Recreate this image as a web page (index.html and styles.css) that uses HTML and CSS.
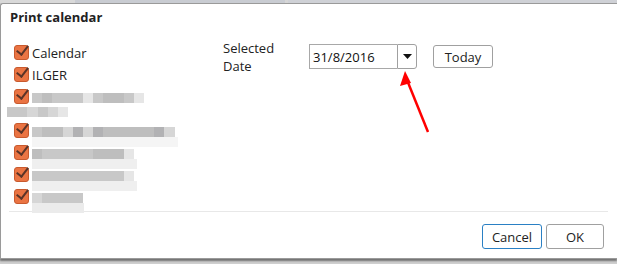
FILE: index.html
```html
<!DOCTYPE html>
<html lang="en">
<head>
<meta charset="UTF-8" />
<title>Print calendar</title>
<meta name="viewport" content="width=device-width, initial-scale=1.0">
<link rel="stylesheet" href="styles.css">
</head>
<body>

  <div class="backdrop"></div>

  <div class="dialog">
    <div class="dialog-title">Print calendar</div>

    <div class="dialog-body">
      <ul class="cal-list">
        <li><span class="check"></span><span>Calendar</span></li>
        <li><span class="check"></span><span>ILGER</span></li>
        <li class="wrap">
          <span class="check"></span>
          <span class="blur">
            <span class="row">
              <i class="g3"></i><i class="g2"></i><i class="g3"></i><i class="g3"></i><i class="g3"></i><i class="g5"></i><i class="g3"></i><i class="g2"></i><i class="g2"></i><i class="g3"></i><i class="g5"></i>
            </span>
          </span>
        </li>
        <li class="overflow">
          <span class="blur">
            <span class="row">
              <i class="g3"></i><i class="g3"></i><i class="g4"></i><i class="g3"></i><i class="g4"></i><i class="g5"></i>
            </span>
          </span>
        </li>
        <li>
          <span class="check"></span>
          <span class="blur">
            <span class="row">
              <i class="g3"></i><i class="g2"></i><i class="g2"></i><i class="g4"></i><i class="g1"></i><i class="g4"></i><i class="g1"></i><i class="g2"></i><i class="g2"></i><i class="g2"></i><i class="g2"></i><i class="g2"></i><i class="g1"></i><i class="g4"></i>
            </span>
            <span class="row light"></span>
          </span>
        </li>
        <li>
          <span class="check"></span>
          <span class="blur">
            <span class="row">
              <i class="g2"></i><i class="g3"></i><i class="g3"></i><i class="g3"></i><i class="g3"></i><i class="g3"></i><i class="g2"></i><i class="g2"></i><i class="g2"></i><i class="g5"></i>
            </span>
            <span class="row light short"></span>
          </span>
        </li>
        <li>
          <span class="check"></span>
          <span class="blur">
            <span class="row">
              <i class="g3"></i><i class="g3"></i><i class="g3"></i><i class="g3"></i><i class="g3"></i><i class="g3"></i><i class="g3"></i><i class="g3"></i><i class="g3"></i><i class="g5"></i>
            </span>
            <span class="row light short"></span>
          </span>
        </li>
        <li>
          <span class="check"></span>
          <span class="blur">
            <span class="row">
              <i class="g4"></i><i class="g3"></i><i class="g3"></i><i class="g3"></i><i class="g3"></i>
            </span>
            <span class="row light tiny"></span>
          </span>
        </li>
      </ul>

      <div class="date-area">
        <div class="date-label">
          <span>Selected</span>
          <span>Date</span>
        </div>
        <div class="date-field">
          <input type="text" value="31/8/2016">
          <button class="drop">
            <svg width="9" height="5" viewBox="0 0 9 5"><path d="M0 0h9L4.5 5z" fill="#111"/></svg>
          </button>
        </div>
        <button class="btn today">Today</button>
      </div>
    </div>

    <div class="dialog-footer">
      <button class="btn cancel">Cancel</button>
      <button class="btn ok">OK</button>
    </div>
  </div>

  <svg class="arrow" width="617" height="264" viewBox="0 0 617 264">
    <line x1="428" y1="132" x2="407" y2="80" stroke="#f00" stroke-width="2.5"/>
    <path d="M405 71 L400 86 L411 83 z" fill="#f00"/>
  </svg>

</body>
</html>
```

FILE: styles.css
```css
body {
  margin: 0;
  font-family: "Open Sans", Arial, sans-serif;
  font-size: 13px;
  color: #222;
  background-color: #cfcfcf;
  height: 264px;
  overflow: hidden;
}
.backdrop {
  height: 3px;
  background: linear-gradient(90deg, #d9d9d9 0, #d9d9d9 75px, #c9ccd2 75px, #c9ccd2 285px, #d6d6d6 285px, #d6d6d6 288px, #cfd1d6 288px);
}
.dialog {
  background-color: #fff;
  border: 1px solid #9a9a9a;
  border-right: none;
  border-radius: 3px 0 0 0;
  height: 254px;
  box-shadow: 0 2px 2px rgba(0, 0, 0, 0.45);
  display: flex;
  flex-direction: column;
}
.dialog-title {
  font-weight: bold;
  padding: 4px 9px 0;
  line-height: 18px;
  height: 25px;
}
.dialog-body {
  display: flex;
  flex: 1;
  border-bottom: 1px solid #e8e8e8;
  margin: 0 9px 0 8px;
}
.cal-list {
  list-style: none;
  margin: 0;
  padding: 14px 0 0 5px;
  width: 209px;
}
.cal-list li {
  display: flex;
  align-items: flex-start;
  gap: 3px;
  height: 22px;
  line-height: 16px;
}
.cal-list li.wrap {
  height: 14px;
}
.cal-list li.overflow {
  height: 20px;
  margin-left: -7px;
}
.check {
  width: 15px;
  height: 15px;
  flex: none;
  box-sizing: border-box;
  border-radius: 3px;
  background-color: #ea7443;
  border: 1px solid #c85a2e;
  position: relative;
}
.check::after {
  content: "";
  position: absolute;
  left: 4px;
  top: -3px;
  width: 5px;
  height: 10px;
  border: solid #5a3428;
  border-width: 0 2.5px 2.5px 0;
  transform: rotate(38deg);
}
.blur {
  display: flex;
  flex-direction: column;
  margin-top: 4px;
}
.blur .row {
  display: flex;
  height: 10px;
}
.blur .row i {
  display: block;
  width: 10.2px;
  height: 10px;
}
.blur .row.light {
  width: 146px;
  background-color: #f5f5f5;
}
.blur .row.light.short {
  width: 105px;
  background-color: #efefef;
}
.blur .row.light.tiny {
  width: 52px;
  background-color: #ebebeb;
}
.g1 { background-color: #b2b2b4; }
.g2 { background-color: #bebebe; }
.g3 { background-color: #c8c8c8; }
.g4 { background-color: #d6d6d6; }
.g5 { background-color: #e6e6e6; }
.date-area {
  display: flex;
  align-items: flex-start;
  padding-top: 8px;
}
.date-label {
  display: flex;
  flex-direction: column;
  line-height: 18px;
  width: 86px;
}
.date-field {
  display: flex;
  margin-top: 5px;
}
.date-field input {
  width: 88px;
  height: 25px;
  box-sizing: border-box;
  border: 1px solid #a8a8a8;
  border-right: none;
  padding: 0 3px;
  font-family: inherit;
  font-size: 13px;
  color: #111;
  outline: none;
}
.drop {
  width: 20px;
  height: 25px;
  box-sizing: border-box;
  border: 1px solid #a0a0a0;
  border-radius: 0 3px 3px 0;
  background-color: #fff;
  padding: 0;
  display: flex;
  align-items: center;
  justify-content: center;
}
.btn {
  font-family: inherit;
  font-size: 13px;
  color: #222;
  background-color: #fff;
  border: 1px solid #a0a0a0;
  border-radius: 3px;
  padding: 0;
}
.today {
  width: 60px;
  height: 23px;
  margin: 6px 0 0 16px;
}
.dialog-footer {
  display: flex;
  justify-content: flex-end;
  gap: 4px;
  padding: 12px 13px 0 0;
  height: 36px;
}
.cancel {
  width: 60px;
  height: 25px;
  border-color: #2a80c4;
}
.ok {
  width: 58px;
  height: 25px;
}
.arrow {
  position: absolute;
  left: 0;
  top: 0;
  pointer-events: none;
}
```
